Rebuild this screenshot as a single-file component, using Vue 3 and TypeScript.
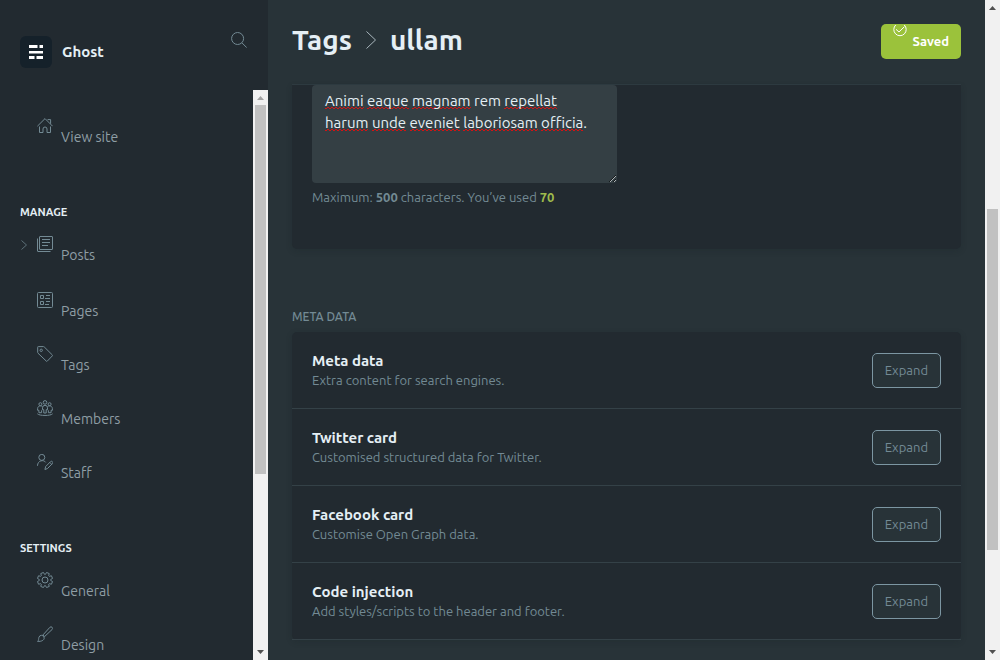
<script setup lang="ts">
import { computed, ref } from 'vue'

interface NavItem {
  label: string
  icon: string
  expandable?: boolean
}

interface NavSection {
  title: string
  items: NavItem[]
}

const gear = (() => {
  const teeth = 8
  const points: string[] = []
  for (let i = 0; i < teeth; i++) {
    const middle = (i * 2 * Math.PI) / teeth + Math.PI / teeth
    const corners: [number, number][] = [
      [-0.31, 5.7],
      [-0.19, 7.7],
      [0.19, 7.7],
      [0.31, 5.7],
    ]
    for (const [offset, radius] of corners) {
      const x = 8 + radius * Math.cos(middle + offset)
      const y = 8 + radius * Math.sin(middle + offset)
      points.push(`${x.toFixed(2)} ${y.toFixed(2)}`)
    }
  }
  return `M${points.join('L')}ZM11 8a3 3 0 1 1-6 0a3 3 0 1 1 6 0Z`
})()

const icons: Record<string, string> = {
  home: 'M.4 8.2L8 .6l7.6 7.6M10.6 1.6h3v4.2M2.5 8.5v6h3.500v-3.500a2 2 0 0 1 4 0v3.500h3.500V8.5',
  posts: 'M3 .5h12a.5.5 0 0 1 .5.5v12a.5.5 0 0 1-.5.5H3a.5.5 0 0 1-.5-.5V1A.5.5 0 0 1 3 .5ZM.5 2.5V15a.5.5 0 0 0 .5.5h12.500M5 3.500h8M5 6.500h8M5 9.500h6',
  pages: 'M1.500.5h13a1 1 0 0 1 1 1v13a1 1 0 0 1-1 1h-13a1 1 0 0 1-1-1v-13a1 1 0 0 1 1-1ZM3.500 3.500h3v3h-3ZM3.500 9.500h3v3h-3ZM9 3.500h4M8 6.500h5M9 9.500h4M8 12.500h4',
  tags: 'M1.300.6h5.200a1 1 0 0 1 .7.300l8.200 8.100a.6.6 0 0 1 0 .8l-5.200 5.400a.6.6 0 0 1-.8 0L1 7.200a1 1 0 0 1-.3-.7V1.300a.6.6 0 0 1 .6-.7ZM5.400 4.300a1.200 1.200 0 1 1-2.400 0a1.200 1.200 0 1 1 2.400 0Z',
  members: 'M9.800 2.400a1.800 1.800 0 1 1-3.600 0a1.800 1.800 0 1 1 3.600 0ZM4.900 4.200a1.500 1.500 0 1 1-3 0a1.500 1.500 0 1 1 3 0ZM14.100 4.200a1.500 1.500 0 1 1-3 0a1.500 1.500 0 1 1 3 0ZM6.800 13V9.700H5.500V7.800a2.500 2.500 0 0 1 5 0v1.900H9.200V13ZM5.300 6.400C3 5 .6 6.500.6 8.600v1.700h1.300v2.400h2.700v-2.400M10.700 6.400c2.300-1.400 4.700.1 4.700 2.200v1.700h-1.300v2.400h-2.700v-2.400M.4 13.800c2 2.200 13.200 2.200 15.200 0',
  staff: 'M7.800 3.400a3 3 0 1 1-6 0a3 3 0 1 1 6 0ZM.5 11.800c0-5.500 6.300-6.500 8.200-3.400M7.900 15.500l.8-3L13.500 7.700a1.300 1.300 0 0 1 1.900 1.900l-4.900 4.900ZM12.800 8.400l1.900 1.900',
  general: gear,
  design: 'M6 8.900L12.900 1.300a1.500 1.500 0 0 1 2.200 2.200L7.600 10.500M6 8.900l1.800 1.800M4.700 9.300a2.700 2.700 0 0 1 2.500 2.900c-.2 2-2.700 3.500-6.700 3.200c1.500-1 .9-2.500 1.400-4a2.800 2.800 0 0 1 2.800-2.100Z',
  search: 'M12.600 6.500a6 6 0 1 1-12 0a6 6 0 1 1 12 0ZM10.900 10.800l4.800 4.800',
}

const sections: NavSection[] = [
  {
    title: 'Manage',
    items: [
      { label: 'Posts', icon: 'posts', expandable: true },
      { label: 'Pages', icon: 'pages' },
      { label: 'Tags', icon: 'tags' },
      { label: 'Members', icon: 'members' },
      { label: 'Staff', icon: 'staff' },
    ],
  },
  {
    title: 'Settings',
    items: [
      { label: 'General', icon: 'general' },
      { label: 'Design', icon: 'design' },
    ],
  },
]

const cards = [
  { title: 'Meta data', text: 'Extra content for search engines.' },
  { title: 'Twitter card', text: 'Customised structured data for Twitter.' },
  { title: 'Facebook card', text: 'Customise Open Graph data.' },
  { title: 'Code injection', text: 'Add styles/scripts to the header and footer.' },
]

const description = ref('Animi eaque magnam rem repellat harum unde eveniet laboriosam officia.')
const knownWords = ['rem']

const words = computed(() =>
  description.value.split(/([A-Za-z]+)/).map((text) => ({
    text,
    misspelt: /^[A-Za-z]+$/.test(text) && !knownWords.includes(text),
  })),
)

const bars = {
  nav: { start: 0, size: 68.4 },
  page: { start: 30.8, size: 54.1 },
}
</script>

<template>
  <div class="app">
    <aside class="sidebar">
      <header class="brand">
        <svg class="logo" viewBox="0 0 32 32" aria-hidden="true">
          <rect width="32" height="32" rx="6" fill="#15212a" />
          <path d="M9 9h8.500v3H9ZM19.500 9H23v3h-3.500ZM9 15h14v2.500H9ZM9 20h5.500v3H9ZM16.500 20H23v3h-6.500Z" fill="#fff" />
        </svg>
        <span class="site">Ghost</span>
        <button class="search" type="button" aria-label="Search">
          <svg class="icon" viewBox="0 0 16 16"><path :d="icons.search" /></svg>
        </button>
      </header>
      <div class="nav-area">
        <nav class="nav">
          <a class="item" href="#site">
            <svg class="icon" viewBox="0 0 16 16" aria-hidden="true"><path :d="icons.home" /></svg>
            <span class="label">View site</span>
          </a>
          <section v-for="section in sections" :key="section.title">
            <h2 class="nav-title">{{ section.title }}</h2>
            <a
              v-for="item in section.items"
              :key="item.label"
              class="item"
              :class="{ expandable: item.expandable }"
              :href="'#' + item.icon"
            >
              <svg v-if="item.expandable" class="chevron" viewBox="0 0 6 10" aria-hidden="true">
                <path d="M.5 .5L5.500 5L.5 9.500" />
              </svg>
              <svg class="icon" viewBox="0 0 16 16" aria-hidden="true"><path :d="icons[item.icon]" /></svg>
              <span class="label">{{ item.label }}</span>
            </a>
          </section>
        </nav>
        <div class="bar" aria-hidden="true">
          <svg class="arrow off" viewBox="0 0 15 15"><path d="M4 10L7.500 6L11 10Z" /></svg>
          <div class="track">
            <div :style="{ height: bars.nav.start + '%' }"></div>
            <div class="thumb" :style="{ height: bars.nav.size + '%' }"></div>
          </div>
          <svg class="arrow" viewBox="0 0 15 15"><path d="M4 5L7.500 9L11 5Z" /></svg>
        </div>
      </div>
    </aside>

    <main class="main">
      <header class="top">
        <h1 class="title">
          <a href="#tags">Tags</a>
          <svg class="divider" viewBox="0 0 10 18" aria-hidden="true"><path d="M.5 .5L9.500 9L.5 17.500" /></svg>
          <span>ullam</span>
        </h1>
        <button class="saved" type="button">
          <svg class="tick" viewBox="0 0 14 14" aria-hidden="true">
            <path d="M2.740 1A6.200 6.200 0 1 0 11.260 1M3 5.300L6 8L11.400 2.700" />
          </svg>
          <span>Saved</span>
        </button>
      </header>

      <section class="panel">
        <div class="field">
          <div class="editor">
            <div class="marks" aria-hidden="true"><span
              v-for="(word, i) in words"
              :key="i"
              :class="{ misspelt: word.misspelt }"
            >{{ word.text }}</span></div>
            <textarea id="description" v-model="description" class="input" aria-label="Description" spellcheck="false"></textarea>
          </div>
          <label class="hint" for="description">Maximum: <b>500</b> characters. You’ve used <b class="used">{{ description.length }}</b></label>
        </div>
      </section>

      <h2 class="group-title">Meta data</h2>
      <section class="cards">
        <article v-for="card in cards" :key="card.title" class="card">
          <div>
            <h3 class="card-title">{{ card.title }}</h3>
            <p class="card-text">{{ card.text }}</p>
          </div>
          <button class="expand" type="button" :aria-label="'Expand ' + card.title">Expand</button>
        </article>
      </section>
    </main>

    <div class="bar" aria-hidden="true">
      <svg class="arrow" viewBox="0 0 15 15"><path d="M4 10L7.500 6L11 10Z" /></svg>
      <div class="track">
        <div :style="{ height: bars.page.start + '%' }"></div>
        <div class="thumb" :style="{ height: bars.page.size + '%' }"></div>
      </div>
      <svg class="arrow" viewBox="0 0 15 15"><path d="M4 5L7.500 9L11 5Z" /></svg>
    </div>
  </div>
</template>

<style>
body {
  margin: 0;
  background: #283338;
}
</style>

<style scoped>
.app {
  display: flex;
  height: 100vh;
  overflow: hidden;
  background: #283338;
  color: #e5eff5;
  font-family: Ubuntu, "Open Sans", "Noto Sans", sans-serif;
  font-size: 14px;
}

.app * {
  box-sizing: border-box;
}

h1, h2, h3, p {
  margin: 0;
}

a {
  color: inherit;
  text-decoration: none;
}

button {
  font-family: inherit;
  cursor: pointer;
}

.sidebar {
  display: flex;
  flex-direction: column;
  flex: 0 0 268px;
  background: #222a30;
}

.brand {
  display: flex;
  align-items: center;
  flex: 0 0 90px;
  gap: 10px;
  padding: 14px 20px 0;
}

.logo {
  width: 32px;
  height: 32px;
}

.site {
  flex: 1;
  padding-bottom: 2px;
  font-size: 15px;
  font-weight: 700;
}

.search {
  align-self: flex-start;
  height: 16px;
  margin-top: 18px;
  padding: 0 1px;
  border: 0;
  background: none;
}

.icon {
  display: block;
  width: 16px;
  height: 16px;
  fill: none;
  stroke: #738a94;
  stroke-width: 1;
}

.nav-area {
  display: flex;
  flex: 1;
  min-height: 0;
}

.nav {
  flex: 1;
  padding: 28px 20px 0;
  overflow: hidden;
}

.item {
  display: flex;
  gap: 8px;
  height: 54px;
  padding-left: 17px;
  color: #8f9ea5;
}

.item.expandable {
  height: 56px;
  padding-left: 1px;
}

.chevron {
  width: 6px;
  height: 10px;
  margin: 4px 2px 0 0;
  fill: none;
  stroke: #5d7078;
}

.label {
  padding-top: 8px;
  line-height: 22px;
}

.nav-title {
  margin: 30px 0 14px;
  font-size: 11px;
  font-weight: 600;
  line-height: 20px;
  text-transform: uppercase;
}

.bar {
  display: flex;
  flex-direction: column;
  flex: 0 0 15px;
  background: #f1f1f1;
}

.arrow {
  width: 15px;
  height: 15px;
  fill: #505050;
}

.arrow.off {
  fill: #a3a3a3;
}

.track {
  flex: 1;
  min-height: 0;
  padding: 0 2px;
}

.thumb {
  background: #c1c1c1;
}

.main {
  flex: 1;
  min-width: 0;
  padding: 0 24px;
}

.top {
  display: flex;
  align-items: flex-start;
  justify-content: space-between;
  height: 85px;
  padding-top: 24px;
  border-bottom: 1px solid #303c42;
}

.title {
  display: flex;
  align-items: center;
  gap: 14px;
  font-size: 28px;
  font-weight: 700;
  line-height: 32px;
}

.divider {
  width: 10px;
  height: 18px;
  fill: none;
  stroke: #a9b6bd;
}

.saved {
  display: flex;
  align-items: flex-start;
  gap: 5px;
  height: 35px;
  padding: 0 12px;
  border: 0;
  border-radius: 5px;
  background: #9bc23b;
  color: #fff;
  font-size: 13px;
  font-weight: 700;
  line-height: 35px;
}

.tick {
  width: 14px;
  height: 14px;
  fill: none;
  stroke: #fff;
}

.panel {
  display: grid;
  grid-template-columns: 1fr 1fr;
  gap: 20px;
  padding: 0 20px 42px;
  border-radius: 0 0 5px 5px;
  background: #222a30;
  box-shadow: 0 2px 6px rgba(20, 28, 33, 0.2);
}

.editor {
  display: grid;
  border-radius: 4px;
  background: #343f44;
}

.marks,
.input {
  grid-area: 1 / 1;
  width: 100%;
  height: 98px;
  margin: 0;
  padding: 5px 18px 5px 13px;
  border: 0;
  background: none;
  font-family: inherit;
  font-size: 15px;
  line-height: 22px;
}

.marks {
  color: transparent;
  white-space: pre-wrap;
}

.misspelt {
  background-image:
    linear-gradient(90deg, #d31414 2px, transparent 2px),
    linear-gradient(90deg, transparent 2px, #d31414 2px);
  background-position: 0 100%, 0 calc(100% - 1px);
  background-repeat: repeat-x;
  background-size: 4px 1px;
}

.input {
  display: block;
  color: #e5eff5;
  outline: 0;
  resize: vertical;
}

.hint {
  display: block;
  margin-top: 4px;
  color: #738a94;
  font-size: 13px;
  line-height: 20px;
}

.used {
  color: #9fbb4c;
}

.group-title {
  margin: 57px 0 5px;
  color: #738a94;
  font-size: 12px;
  font-weight: 500;
  line-height: 21px;
  text-transform: uppercase;
}

.cards {
  border-radius: 5px;
  background: #222a30;
  box-shadow: 0 2px 6px rgba(20, 28, 33, 0.2);
}

.card {
  display: flex;
  align-items: center;
  justify-content: space-between;
  padding: 19px 20px;
  border-bottom: 1px solid #344147;
}

.card-title {
  font-size: 15px;
  font-weight: 700;
  line-height: 20px;
}

.card-text {
  color: #738a94;
  font-size: 13px;
  line-height: 18px;
}

.expand {
  height: 35px;
  padding: 0 12px;
  border: 1px solid #7c96a2;
  border-radius: 5px;
  background: #283338;
  color: #738a94;
  font-size: 13px;
}
</style>
